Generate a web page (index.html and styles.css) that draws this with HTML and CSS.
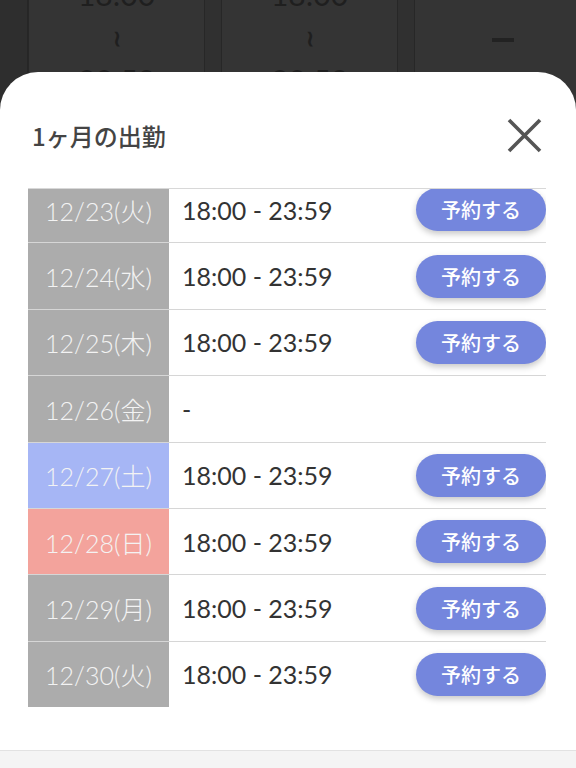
FILE: index.html
```html
<!DOCTYPE html>
<html lang="ja">
<head>
  <meta charset="UTF-8" />
  <meta name="viewport" content="width=device-width, initial-scale=1.0"/>
  <title>1ヶ月の出勤</title>
  <link rel="stylesheet" href="styles.css">
</head>
<body>

  <div class="screen">
    <!-- calendar behind the sheet -->
    <div class="backdrop">
      <div class="bg-side"></div>
      <div class="bg-cell">
        <span>18:00</span>
        <span class="wave">≀</span>
        <span>23:59</span>
      </div>
      <div class="bg-cell">
        <span>18:00</span>
        <span class="wave">≀</span>
        <span>23:59</span>
      </div>
      <div class="bg-cell">
        <span class="dash"></span>
      </div>
    </div>

    <div class="sheet">
      <div class="sheet-head">
        <h2>1ヶ月の出勤</h2>
        <button class="close" aria-label="閉じる">
          <svg width="35" height="35" viewBox="0 0 35 35">
            <path d="M2 2 L33 33 M33 2 L2 33" stroke="#555" stroke-width="3.6" fill="none"/>
          </svg>
        </button>
      </div>

      <div class="list">
        <div class="list-inner">
          <div class="row">
            <div class="day">12/23(火)</div>
            <div class="time">18:00 - 23:59</div>
            <button class="reserve">予約する</button>
          </div>
          <div class="row">
            <div class="day">12/24(水)</div>
            <div class="time">18:00 - 23:59</div>
            <button class="reserve">予約する</button>
          </div>
          <div class="row">
            <div class="day">12/25(木)</div>
            <div class="time">18:00 - 23:59</div>
            <button class="reserve">予約する</button>
          </div>
          <div class="row">
            <div class="day">12/26(金)</div>
            <div class="time">-</div>
          </div>
          <div class="row">
            <div class="day sat">12/27(土)</div>
            <div class="time">18:00 - 23:59</div>
            <button class="reserve">予約する</button>
          </div>
          <div class="row">
            <div class="day sun">12/28(日)</div>
            <div class="time">18:00 - 23:59</div>
            <button class="reserve">予約する</button>
          </div>
          <div class="row">
            <div class="day">12/29(月)</div>
            <div class="time">18:00 - 23:59</div>
            <button class="reserve">予約する</button>
          </div>
          <div class="row">
            <div class="day">12/30(火)</div>
            <div class="time">18:00 - 23:59</div>
            <button class="reserve">予約する</button>
          </div>
        </div>
      </div>

      <div class="sheet-foot"></div>
    </div>
  </div>

</body>
</html>
```

FILE: styles.css
```css
body {
  margin: 0;
  background: #303030;
  font-family: Lato, "Noto Sans CJK JP", sans-serif;
  overflow: hidden;
}
.screen {
  position: relative;
  width: 576px;
  height: 768px;
  overflow: hidden;
}
.backdrop {
  display: flex;
  height: 100%;
}
.bg-side {
  width: 27px;
  flex-shrink: 0;
  background: #2e2e2e;
  border-right: 1px solid #262626;
}
.bg-cell {
  width: 175px;
  flex-shrink: 0;
  margin-right: 16px;
  background: #343434;
  border-left: 1px solid #272727;
  border-right: 1px solid #272727;
  display: flex;
  flex-direction: column;
  align-items: center;
  color: #1f1f1f;
  font-size: 30px;
  line-height: 43px;
  margin-top: -27px;
}
.bg-cell .wave {
  font-size: 22px;
  font-weight: 700;
}
.bg-cell .dash {
  display: block;
  width: 22px;
  height: 4px;
  background: #222;
  margin-top: 65px;
}
.sheet {
  position: absolute;
  top: 72px;
  left: 0;
  right: 0;
  bottom: 0;
  background: #fff;
  border-radius: 38px 38px 0 0;
  display: flex;
  flex-direction: column;
}
.sheet-head {
  display: flex;
  align-items: center;
  justify-content: space-between;
  padding: 46px 34px 0 32px;
  margin-bottom: 35px;
}
.sheet-head h2 {
  margin: 0;
  font-family: "Noto Sans CJK JP", sans-serif;
  font-size: 24px;
  line-height: 34px;
  font-weight: 500;
  color: #444;
}
.close {
  background: none;
  border: none;
  padding: 0;
  width: 35px;
  height: 35px;
  cursor: pointer;
}
.close svg {
  display: block;
}
.list {
  margin: 0 30px 0 28px;
  border-top: 1px solid #d8d8d8;
  overflow: hidden;
}
.list-inner {
  margin-top: -13px;
}
.row {
  display: flex;
  align-items: center;
  height: 66.4px;
  box-sizing: border-box;
  border-top: 1px solid #d6d6d6;
}
.day {
  align-self: stretch;
  width: 141px;
  flex-shrink: 0;
  display: flex;
  align-items: center;
  justify-content: center;
  background: #acacac;
  color: #f3f3f3;
  font-size: 25px;
  font-weight: 300;
}
.day.sat {
  background: #a6b6f5;
}
.day.sun {
  background: #f3a39c;
}
.time {
  flex: 1;
  padding-left: 13px;
  font-size: 25px;
  color: #333;
}
.reserve {
  width: 130px;
  height: 43px;
  border: none;
  border-radius: 22px;
  background: #7486dd;
  color: #fff;
  font-family: "Noto Sans CJK JP", sans-serif;
  font-size: 20px;
  font-weight: 500;
  box-shadow: 0 3px 6px rgba(0,0,0,0.22);
  cursor: pointer;
}
.sheet-foot {
  margin-top: auto;
  height: 17px;
  background: #f4f4f4;
  border-top: 1px solid #e2e2e2;
}
```
